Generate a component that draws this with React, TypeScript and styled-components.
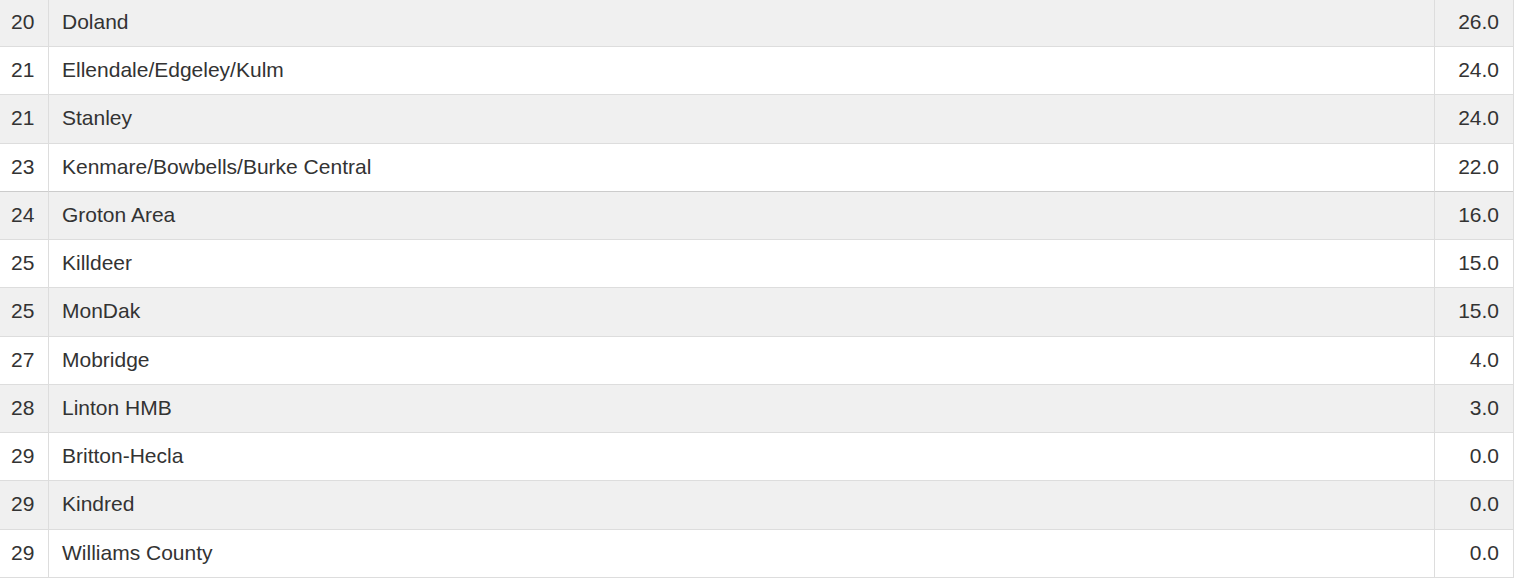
import styled, { createGlobalStyle } from "styled-components";

type Row = {
  rank: number;
  team: string;
  points: string;
  strong?: boolean;
};

const rows: Row[] = [
  { rank: 20, team: "Doland", points: "26.0" },
  { rank: 21, team: "Ellendale/Edgeley/Kulm", points: "24.0" },
  { rank: 21, team: "Stanley", points: "24.0" },
  { rank: 23, team: "Kenmare/Bowbells/Burke Central", points: "22.0", strong: true },
  { rank: 24, team: "Groton Area", points: "16.0" },
  { rank: 25, team: "Killdeer", points: "15.0" },
  { rank: 25, team: "MonDak", points: "15.0" },
  { rank: 27, team: "Mobridge", points: "4.0" },
  { rank: 28, team: "Linton HMB", points: "3.0" },
  { rank: 29, team: "Britton-Hecla", points: "0.0" },
  { rank: 29, team: "Kindred", points: "0.0" },
  { rank: 29, team: "Williams County", points: "0.0" },
];

const GlobalStyle = createGlobalStyle`
  html, body {
    margin: 0;
    padding: 0;
    background: #fff;
    overflow: hidden;
  }
  body {
    font-family: "Liberation Sans", Arial, Helvetica, sans-serif;
    color: #333;
  }
`;

export default function App() {
  return (
    <>
      <GlobalStyle />
      <Wrapper>
        <Table>
          <colgroup>
            <col style={{ width: 49 }} />
            <col />
            <col style={{ width: 79 }} />
          </colgroup>
          <tbody>
            {rows.map((row, i) => (
              <TableRow key={i} $striped={i % 2 === 0} $strong={row.strong}>
                <RankCell>{row.rank}</RankCell>
                <TeamCell>{row.team}</TeamCell>
                <PointsCell>{row.points}</PointsCell>
              </TableRow>
            ))}
          </tbody>
        </Table>
      </Wrapper>
    </>
  );
}

const Wrapper = styled.div`
  width: 1514px;
  margin-top: -1.27px;
`;

const Table = styled.table`
  width: 1514px;
  table-layout: fixed;
  border-collapse: separate;
  border-spacing: 0;
  border-right: 1px solid #ddd;
  font-size: 21px;
`;

const TableRow = styled.tr<{ $striped: boolean; $strong?: boolean }>`
  background: ${(p) => (p.$striped ? "#f0f0f0" : "#fff")};

  td {
    border-bottom: 1px solid ${(p) => (p.$strong ? "#ccc" : "#ddd")};
  }
`;

const Cell = styled.td`
  padding: 9px 13px 11px;
  line-height: 27.27px;
  vertical-align: middle;
  white-space: nowrap;
`;

const RankCell = styled(Cell)`
  padding-left: 11px;
  padding-right: 0;
  border-right: 1px solid #ddd;
`;

const TeamCell = styled(Cell)``;

const PointsCell = styled(Cell)`
  border-left: 1px solid #ddd;
  text-align: right;
  padding-right: 14px;
`;
